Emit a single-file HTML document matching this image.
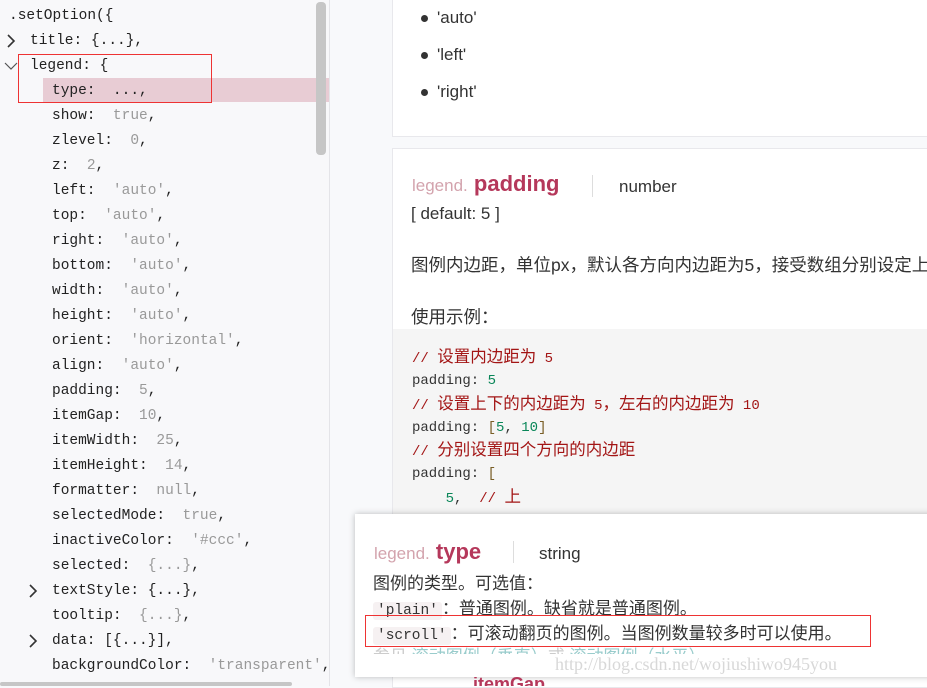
<!DOCTYPE html>
<html><head><meta charset="utf-8"><style>
*{margin:0;padding:0;box-sizing:border-box}
body{width:927px;height:686px;overflow:hidden;background:#f8f9fb;position:relative;font-family:"Liberation Sans","Noto Sans CJK SC",sans-serif;color:#333}
.left{position:absolute;left:0;top:0;width:330px;height:686px;background:#f8f8fa;border-right:1px solid #e4e4e8;font-family:"Liberation Mono","Noto Sans CJK SC",monospace;font-size:14.5px;color:#222;overflow:hidden}
.ln{position:absolute;height:25px;line-height:25px;white-space:pre}
.g{color:#999}
.hl{position:absolute;left:43px;top:78px;width:287px;height:24px;background:#e8ccd4}
.sb{position:absolute;left:316px;top:2px;width:10px;height:153px;background:#c6c6c6;border-radius:4px}
.arr{position:absolute}
.redbox{position:absolute;border:1px solid #e33}
.card{position:absolute;background:#fff;border:1px solid #e8e8ec}
.bul{position:absolute;left:420px;font-size:17px;color:#333}
.bul:before{content:"";position:absolute;left:1px;top:7px;width:7px;height:7px;border-radius:50%;background:#333}
.bul span{margin-left:17px}
.code{position:absolute;left:393px;top:329px;width:534px;height:186px;background:#f5f5f5;font-family:"Liberation Mono","Noto Sans CJK SC",monospace;font-size:14px}
.cl{position:absolute;left:19px;white-space:pre;line-height:20px}
.cm{color:#a31515}.nm{color:#098658}.br{color:#795e26}
.cj{font-size:16.5px}
.pop{position:absolute;left:355px;top:514px;width:580px;height:163px;background:#fff;box-shadow:0 0 6px rgba(0,0,0,.25)}
.tag{background:#f6f1f2;border-radius:3px;padding:1px 4px;font-family:"Liberation Mono",monospace;font-size:14.5px}
</style></head><body>
<div class="left">
<div class="hl"></div>
<div class="ln" style="left:9px;top:4px">.setOption({</div>
<svg class="arr" style="left:6px;top:34px" width="10" height="14"><path d="M2 1 L8 7 L2 13" fill="none" stroke="#333" stroke-width="1.6"/></svg>
<div class="ln" style="left:30px;top:29px">title: {...},</div>
<svg class="arr" style="left:4px;top:61px" width="14" height="10"><path d="M1 2 L7 8 L13 2" fill="none" stroke="#555" stroke-width="1.2"/></svg>
<div class="ln" style="left:30px;top:54px">legend: {</div>
<div class="ln" style="left:52px;top:79px">type:  ...,</div>
<div class="ln" style="left:52px;top:104px">show:  <span class="g">true</span>,</div>
<div class="ln" style="left:52px;top:129px">zlevel:  <span class="g">0</span>,</div>
<div class="ln" style="left:52px;top:154px">z:  <span class="g">2</span>,</div>
<div class="ln" style="left:52px;top:179px">left:  <span class="g">'auto'</span>,</div>
<div class="ln" style="left:52px;top:204px">top:  <span class="g">'auto'</span>,</div>
<div class="ln" style="left:52px;top:229px">right:  <span class="g">'auto'</span>,</div>
<div class="ln" style="left:52px;top:254px">bottom:  <span class="g">'auto'</span>,</div>
<div class="ln" style="left:52px;top:279px">width:  <span class="g">'auto'</span>,</div>
<div class="ln" style="left:52px;top:304px">height:  <span class="g">'auto'</span>,</div>
<div class="ln" style="left:52px;top:329px">orient:  <span class="g">'horizontal'</span>,</div>
<div class="ln" style="left:52px;top:354px">align:  <span class="g">'auto'</span>,</div>
<div class="ln" style="left:52px;top:379px">padding:  <span class="g">5</span>,</div>
<div class="ln" style="left:52px;top:404px">itemGap:  <span class="g">10</span>,</div>
<div class="ln" style="left:52px;top:429px">itemWidth:  <span class="g">25</span>,</div>
<div class="ln" style="left:52px;top:454px">itemHeight:  <span class="g">14</span>,</div>
<div class="ln" style="left:52px;top:479px">formatter:  <span class="g">null</span>,</div>
<div class="ln" style="left:52px;top:504px">selectedMode:  <span class="g">true</span>,</div>
<div class="ln" style="left:52px;top:529px">inactiveColor:  <span class="g">'#ccc'</span>,</div>
<div class="ln" style="left:52px;top:554px">selected:  <span class="g">{...}</span>,</div>
<svg class="arr" style="left:28px;top:584px" width="10" height="14"><path d="M2 1 L8 7 L2 13" fill="none" stroke="#333" stroke-width="1.6"/></svg>
<div class="ln" style="left:52px;top:579px">textStyle: {...},</div>
<div class="ln" style="left:52px;top:604px">tooltip:  <span class="g">{...}</span>,</div>
<svg class="arr" style="left:28px;top:634px" width="10" height="14"><path d="M2 1 L8 7 L2 13" fill="none" stroke="#333" stroke-width="1.6"/></svg>
<div class="ln" style="left:52px;top:629px">data: [{...}],</div>
<div class="ln" style="left:52px;top:654px">backgroundColor:  <span class="g">'transparent'</span>,</div>
<div style="position:absolute;left:0;top:682px;width:292px;height:4px;background:#c6c6c6;border-radius:2px"></div>
<div class="sb"></div>
</div>
<div class="redbox" style="left:18px;top:54px;width:194px;height:49px"></div>

<div class="card" style="left:392px;top:-2px;width:540px;height:139px"></div>
<div class="bul" style="top:8px"><span>'auto'</span></div>
<div class="bul" style="top:45px"><span>'left'</span></div>
<div class="bul" style="top:82px"><span>'right'</span></div>

<div class="card" style="left:392px;top:148px;width:540px;height:540px"></div>
<div style="position:absolute;left:412px;top:171px;font-size:22px;white-space:nowrap"><span style="color:#d3a3ad;font-size:17px">legend.</span> <b style="color:#b5385b">padding</b></div>
<div style="position:absolute;left:592px;top:175px;width:1px;height:22px;background:#ddd"></div>
<div style="position:absolute;left:619px;top:177px;font-size:17px">number</div>
<div style="position:absolute;left:411px;top:204px;font-size:17px">[ default: 5 ]</div>
<div style="position:absolute;left:411px;top:252px;font-size:17.5px;white-space:nowrap">图例内边距，单位px，默认各方向内边距为5，接受数组分别设定上</div>
<div style="position:absolute;left:411px;top:304px;font-size:17.5px">使用示例：</div>
<div class="code">
<div class="cl cm" style="top:19px">// <span class="cj">设置内边距为</span> 5</div>
<div class="cl" style="top:42px">padding: <span class="nm">5</span></div>
<div class="cl cm" style="top:66px">// <span class="cj">设置上下的内边距为</span> 5<span class="cj">，左右的内边距为</span> 10</div>
<div class="cl" style="top:89px">padding: <span class="br">[</span><span class="nm">5</span>, <span class="nm">10</span><span class="br">]</span></div>
<div class="cl cm" style="top:112px">// <span class="cj">分别设置四个方向的内边距</span></div>
<div class="cl" style="top:135px">padding: <span class="br">[</span></div>
<div class="cl" style="top:159px">    <span class="nm">5</span>,  <span class="cm">// <span class="cj">上</span></span></div>
</div>

<div class="pop">
<div style="position:absolute;left:19px;top:25px;font-size:22px;white-space:nowrap"><span style="color:#d3a3ad;font-size:17px">legend.</span> <b style="color:#b5385b">type</b></div>
<div style="position:absolute;left:158px;top:27px;width:1px;height:22px;background:#ddd"></div>
<div style="position:absolute;left:184px;top:30px;font-size:17px">string</div>
<div style="position:absolute;left:18px;top:55px;font-size:17px">图例的类型。可选值：</div>
<div style="position:absolute;left:18px;top:80px;font-size:17px;white-space:nowrap"><span class="tag">'plain'</span>：普通图例。缺省就是普通图例。</div>
<div style="position:absolute;left:18px;top:105px;font-size:17px;white-space:nowrap"><span class="tag">'scroll'</span>：可滚动翻页的图例。当图例数量较多时可以使用。</div>
<div style="position:absolute;left:18px;top:128px;font-size:17px;color:#ccc;white-space:nowrap;height:12px;overflow:hidden">参见 <span style="color:#9cc">滚动图例（垂直）</span>或 <span style="color:#9cc">滚动图例（水平）</span></div>
<div style="position:absolute;left:200px;top:140px;font-family:'Liberation Serif',serif;font-size:18px;color:#d8d8d8;white-space:nowrap">http://blog.csdn.net/wojiushiwo945you</div>
</div>
<div class="redbox" style="left:365px;top:615px;width:506px;height:32px"></div>
<div style="position:absolute;left:473px;top:677px;font-size:18px;color:#b5385b;font-weight:bold;height:9px;overflow:hidden;line-height:14px">itemGap</div>
</body></html>
